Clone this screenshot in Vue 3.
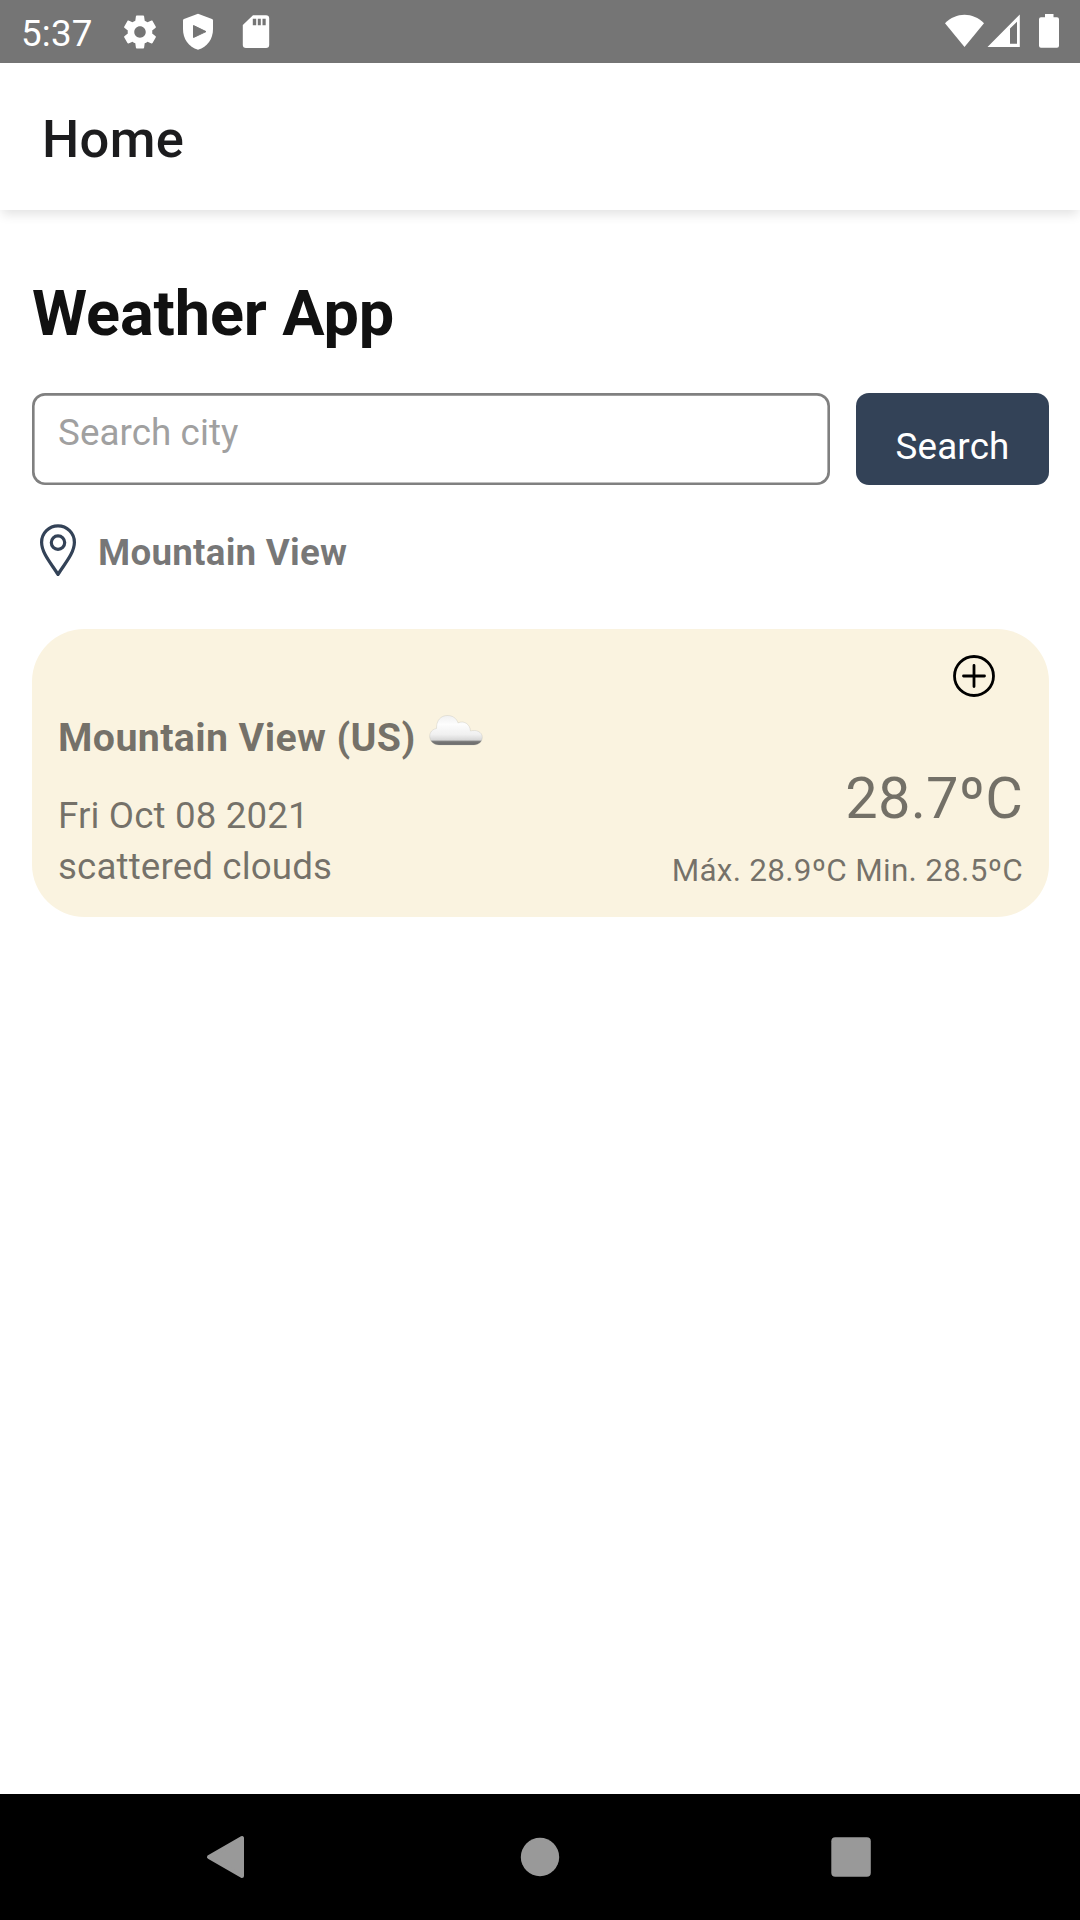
<script setup>
import { ref } from 'vue'

const location = 'Mountain View'
const query = ref('')
const weather = {
  city: 'Mountain View (US)',
  date: 'Fri Oct 08 2021',
  description: 'scattered clouds',
  temp: '28.7ºC',
  range: 'Máx. 28.9ºC Min. 28.5ºC',
}
</script>

<template>
  <div class="screen">
    <div class="status">
      <span class="clock">5:37</span>
      <div class="notices">
        <svg width="40" height="40" viewBox="-0.2 -0.2 24.4 24.4" fill="#fff">
          <path d="M19.43 12.98c.04-.32.07-.64.07-.98s-.03-.66-.07-.98l2.11-1.65c.19-.15.24-.42.12-.64l-2-3.46c-.12-.22-.39-.3-.61-.22l-2.49 1c-.52-.4-1.08-.73-1.69-.98l-.38-2.65C14.46 2.18 14.25 2 14 2h-4c-.25 0-.46.18-.49.42l-.38 2.65c-.61.25-1.17.59-1.69.98l-2.49-1c-.23-.09-.49 0-.61.22l-2 3.46c-.13.22-.07.49.12.64l2.11 1.65c-.04.32-.07.65-.07.98s.03.66.07.98l-2.11 1.65c-.19.15-.24.42-.12.64l2 3.46c.12.22.39.3.61.22l2.49-1c.52.4 1.08.73 1.69.98l.38 2.65c.03.24.24.42.49.42h4c.25 0 .46-.18.49-.42l.38-2.65c.61-.25 1.17-.59 1.69-.98l2.49 1c.23.09.49 0 .61-.22l2-3.46c.12-.22.07-.49-.12-.64l-2.11-1.65zM12 15.5c-1.93 0-3.5-1.57-3.5-3.5s1.57-3.5 3.5-3.5 3.500 1.570 3.500 3.500-1.570 3.500-3.500 3.500z" />
        </svg>
        <svg width="40" height="40" viewBox="0 0 40 40">
          <path d="M20 1.700 34 7Q35 7.400 35 8.500V17C35 27 29.500 35 20 37.800C10.500 35 5 27 5 17V8.500Q5 7.400 6 7Z" fill="#fff" />
          <path d="M15.500 13.500V25.500L28 19.600Z" fill="#757575" stroke="#757575" stroke-width="1" stroke-linejoin="round" />
        </svg>
        <svg width="40" height="40" viewBox="0 0 40 40">
          <path d="M17 3.200H30Q33.200 3.200 33.200 6.400V32.800Q33.200 36 30 36H10Q6.800 36 6.800 32.800V13Z" fill="#fff" />
          <path d="M16.800 6.800h3.400v6.400h-3.400zM21.800 6.800h3v6.400h-3zM26.500 6.800h3.200v6.400h-3.200z" fill="#757575" />
        </svg>
      </div>
      <svg class="signals" width="120" height="40" viewBox="0 0 120 40" fill="#fff">
        <path d="M5 11.300C16 -0.100 33 -0.100 44 11.300L24.500 35Z" />
        <path d="M47.500 35 79.800 2.500V35ZM70 16.500V31.700H77V9.800Z" fill-rule="evenodd" />
        <path d="M105 2h8.500v3.200h3.500q2 0 2 2v26.600q0 2-2 2h-16q-2 0-2-2V7.200q0-2 2-2h4z" />
      </svg>
    </div>

    <header class="bar"><h2>Home</h2></header>

    <main class="content">
      <h1>Weather App</h1>
      <div class="search">
        <input v-model="query" class="field" type="text" placeholder="Search city" />
        <button class="go">Search</button>
      </div>

      <div class="location">
        <svg width="52" height="52" viewBox="0 0 52 52" fill="none" stroke="#334257">
          <path d="M26 50.500C20 40.500 9.600 29.500 9.600 18.300A16.400 16.400 0 0 1 42.400 18.300C42.400 29.500 32 40.500 26 50.500Z" stroke-width="3.200" />
          <circle cx="26" cy="18.600" r="6.700" stroke-width="3.200" />
        </svg>
        <strong>{{ location }}</strong>
      </div>

      <section class="card">
        <div class="actions">
          <svg width="42" height="42" viewBox="0 0 42 42" fill="none" stroke="#000" stroke-width="2.800" stroke-linecap="round">
            <circle cx="21" cy="21" r="19.500" />
            <path d="M21 10.500v21M10.500 21h21" />
          </svg>
        </div>
        <div class="details">
          <div class="left">
            <div class="city">
              <span>{{ weather.city }}</span>
              <svg width="56" height="36" viewBox="0 0.300 56 36">
                <defs>
                  <linearGradient id="cloud" x1="0" y1="0" x2="0" y2="1">
                    <stop offset="0" stop-color="#f0f0f0" />
                    <stop offset="0.300" stop-color="#fdfdfd" />
                    <stop offset="0.650" stop-color="#f0f0f0" />
                    <stop offset="0.830" stop-color="#d8d8d8" />
                    <stop offset="0.890" stop-color="#757575" />
                    <stop offset="1" stop-color="#6c6c6c" />
                  </linearGradient>
                  <filter id="soft" x="-10%" y="-10%" width="120%" height="130%">
                    <feGaussianBlur stdDeviation="0.600" />
                  </filter>
                </defs>
                <path d="M11 31.200C5 31 1.700 27 1.700 22.500C1.700 18.500 4.500 15.500 8.500 14.800C8.300 6.500 13 1.800 19.500 1.800C24.500 1.800 28.500 4.500 30 9.200C35.500 6.500 42 10 42.500 17.300C48.500 15.500 54.300 18.500 54.300 23.500C54.300 28 51 31 46 31.200Z" fill="url(#cloud)" stroke="#a8a69f" stroke-opacity="0.300" stroke-width="0.800" filter="url(#soft)" />
              </svg>
            </div>
            <p>{{ weather.date }}</p>
            <p>{{ weather.description }}</p>
          </div>
          <div class="right">
            <span class="temp">{{ weather.temp }}</span>
            <span class="range">{{ weather.range }}</span>
          </div>
        </div>
      </section>
    </main>

    <nav class="nav">
      <svg width="1080" height="126" viewBox="0 0 1080 126" fill="#999">
        <path d="M209 63 242 44V82Z" stroke="#999" stroke-width="4" stroke-linejoin="round" />
        <circle cx="540" cy="63" r="19.200" />
        <rect x="831.300" y="43.200" width="39.500" height="39.500" rx="4" />
      </svg>
    </nav>
  </div>
</template>

<style>
body {
  margin: 0;
  background: #fff;
}
</style>

<style scoped>
.screen {
  width: 1080px;
  height: 1920px;
  display: flex;
  flex-direction: column;
  overflow: hidden;
  background: #fff;
  color: rgba(0, 0, 0, 0.54);
  font-family: Roboto, "Liberation Sans", sans-serif;
  font-size: 36.75px;
  line-height: 43px;
}
svg {
  display: block;
  flex: none;
}
h1,
h2,
p {
  margin: 0;
}
.status {
  flex: none;
  box-sizing: border-box;
  height: 63px;
  padding: 12px 20px 0 21px;
  display: flex;
  background: #757575;
  color: #fff;
}
.clock {
  width: 99px;
  letter-spacing: 0.2px;
}
.notices {
  display: flex;
  gap: 18px;
}
.signals {
  margin-left: auto;
}
.bar {
  flex: none;
  box-sizing: border-box;
  height: 147px;
  padding: 45px 42px 0;
  background: #fff;
  box-shadow: 0 6px 11px -2px rgba(0, 0, 0, 0.12);
}
h2 {
  font-size: 52.5px;
  line-height: 62px;
  font-weight: 500;
  letter-spacing: 0.35px;
  color: #1c1c1e;
}
.content {
  flex: 1;
  padding: 67px 31px 0 32px;
}
h1 {
  font-size: 63px;
  line-height: 73px;
  font-weight: 700;
  letter-spacing: -0.12px;
  color: #111;
}
.search {
  display: flex;
  gap: 26px;
  height: 92px;
  margin-top: 43px;
}
.field {
  flex: 1;
  min-width: 0;
  box-sizing: border-box;
  margin: 0;
  border: 0;
  padding: 18px 26px 31px;
  border-radius: 13px;
  background: transparent;
  box-shadow: inset 0 0 0 2.625px #808080;
  font: inherit;
  letter-spacing: 0.08px;
  outline: none;
}
.field::placeholder {
  color: #a0a0a0;
  opacity: 1;
}
.go {
  width: 193px;
  box-sizing: border-box;
  margin: 0;
  border: 0;
  padding: 32px 0 17px;
  border-radius: 13px;
  background: #334257;
  color: #fff;
  font: inherit;
  letter-spacing: 0.2px;
  text-align: center;
}
.location {
  display: flex;
  gap: 14px;
  height: 52px;
  margin-top: 39px;
}
.location strong {
  font-weight: 700;
  letter-spacing: 0.24px;
  padding-top: 7px;
}
.card {
  box-sizing: border-box;
  height: 288px;
  margin-top: 53px;
  padding: 26px 26px 0;
  border-radius: 52.5px;
  background: #faf3e0;
}
.actions {
  display: flex;
  justify-content: flex-end;
  height: 59px;
  padding-right: 28px;
}
.details {
  display: flex;
  justify-content: space-between;
}
.city {
  display: flex;
  gap: 12px;
  margin-bottom: 33px;
  font-size: 39.375px;
  line-height: 47px;
  font-weight: 700;
  letter-spacing: 0.35px;
}
.left p {
  letter-spacing: 0.12px;
}
.left p + p {
  margin-top: 8px;
}
.right {
  display: flex;
  flex-direction: column;
  align-items: flex-end;
  padding-top: 50px;
}
.temp {
  font-size: 57.75px;
  line-height: 68px;
  letter-spacing: 0.2px;
}
.range {
  margin-top: 20px;
  font-size: 31.5px;
  line-height: 37px;
  letter-spacing: 0.26px;
}
.nav {
  flex: none;
  height: 126px;
  background: #000;
}
</style>
